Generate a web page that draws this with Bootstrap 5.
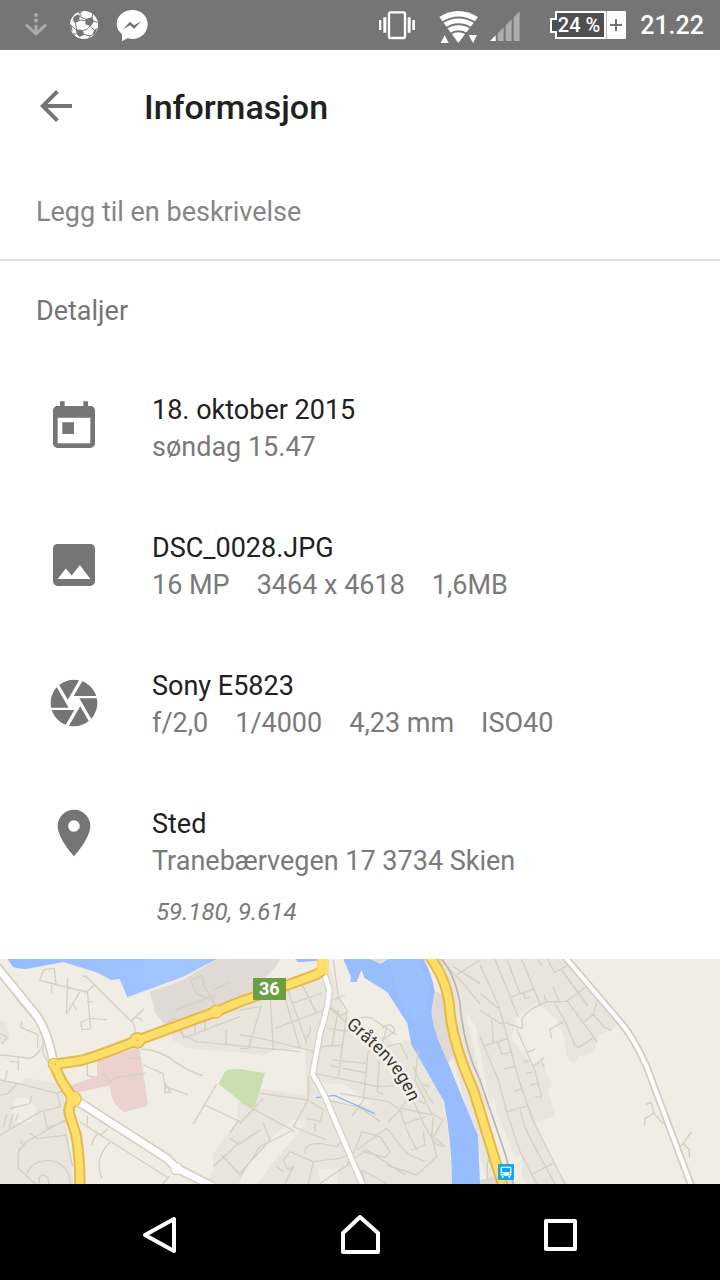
<!DOCTYPE html>
<html lang="nb">
<head>
<meta charset="utf-8">
<meta name="viewport" content="width=device-width, initial-scale=1">
<title>Informasjon</title>
<link href="https://cdn.jsdelivr.net/npm/bootstrap@5.3.0/dist/css/bootstrap.min.css" rel="stylesheet">
<style>
  body { font-family: Roboto, "Noto Sans", sans-serif; font-size: 27px; line-height: 37px; color: #212121; background: #fff; }
  svg { display: block; flex-shrink: 0; }
  .status-bar { height: 50px; background: #757575; color: #fff; padding: 0 16px 0 24px; }
  .status-left { gap: 18px; }
  .status-battery { margin-left: 30px; }
  .status-signal { margin-left: 12px; }
  .clock { font-size: 25px; font-weight: 500; line-height: 48px; padding-top: 2px; margin-left: 14px; }
  .app-header { height: 112px; padding-left: 32px; gap: 64px; }
  .app-title { font-size: 34px; font-weight: 500; line-height: 40px; padding-top: 2px; }
  .describe { height: 99px; padding: 4px 36px 0; border-bottom: 2px solid #e0e0e0; }
  .describe input { font-size: 27px; line-height: 37px; color: #212121; outline: 0; }
  .describe input::placeholder { color: #858585; opacity: 1; }
  .section-title { font-size: 27px; font-weight: 400; line-height: 37px; color: #757575; padding: 32px 36px 30px; }
  .info-row { padding: 32px 46px; gap: 50px; }
  .info-icon { margin-top: 7px; }
  .info-row:last-child { padding-bottom: 31px; }
  .info-row:last-child .info-icon { margin-top: -1px; }
  .muted { color: #7a7a7a; }
  .facts { column-gap: 27px; }
  .coords { font-size: 24px; line-height: 32px; padding: 16px 0 0 4px; }
  .map-area { min-height: 225px; background: #f0ede5; }
  .nav-bar { height: 96px; background: #000; padding: 6px 60px 0; }
</style>
</head>
<body>
<div class="d-flex flex-column min-vh-100">
  <div class="status-bar d-flex align-items-center">
    <div class="status-left d-flex">
      <svg width="28" height="50" viewBox="0 0 28 50" fill="#acacac" aria-hidden="true">
        <circle cx="12" cy="15" r="2"/><circle cx="12" cy="20.500" r="2"/>
        <path d="M12 25v8M2 24.500l10 9.500 10-9.500" fill="none" stroke="#acacac" stroke-width="3"/>
      </svg>
      <svg width="28" height="50" viewBox="210 0 84 150" aria-hidden="true">
        <circle cx="252" cy="75" r="42" fill="#fff"/>
        <g fill="#757575">
          <path d="M220 52l13-9 7 4-2 10-12 11-6-3zM257 57l20-6 5 14-10 14-16-6zM228 88l20 2 5 14-14 7-9-8zM283 89l9-6-6 18-10 5zM233 37l16-5-8 9zM210 72l5 3 3 20-7-8z"/>
          <path d="M240 50l20 9M226 66l4 24M230 66q10-9 28-3M228 66l10-7M249 91l11-2 12-13M272 79l12 13M280 62l12 6M252 103l18 5 8-4M270 108l-4 8M238 40l6 8M276 53l2-12M215 78l14 12M228 103l-8-2" fill="none" stroke="#757575" stroke-width="3"/>
        </g>
      </svg>
      <svg width="32" height="50" viewBox="346 0 96 150" aria-hidden="true">
        <path d="M395 30c26 0 46 18 46 43s-20 44-46 44c-6 0-10-1-15-2l-16 9v-21c-10-8-16-18-16-30 0-25 21-43 47-43z" fill="#fff"/>
        <path d="M367 88l21-23 12 11 22-12-22 23-11-11z" fill="#757575"/>
      </svg>
    </div>
    <svg class="ms-auto" width="36" height="50" viewBox="57 0 108 150" fill="#fff" aria-label="Vibrering" role="img">
      <rect x="87" y="37" width="48" height="77" rx="4" fill="none" stroke="#fff" stroke-width="7"/>
      <path d="M57 60h7v30h-7zM70 52h9v46h-9zM143 52h9v46h-9zM157 60h8v30h-8z"/>
    </svg>
    <svg class="ms-4" width="39" height="50" viewBox="235 0 117 150" fill="#fff" aria-label="Wi-Fi" role="img">
      <path d="M293 129L236 51Q262 33 293 33T352 51z"/>
      <path d="M242 69Q293 36 346 69M254 85Q293 60 334 85M268 102Q293 86 320 102" fill="none" stroke="#757575" stroke-width="6"/>
      <path d="M240 129l12-24 12 24zM324 105h25l-12 24z"/>
    </svg>
    <svg class="status-signal" width="30" height="50" viewBox="388 0 90 150" fill="#acacac" aria-label="Signal" role="img">
      <path d="M388 123l17-17v17z" fill="#fff"/>
      <path d="M411 100l18-18v41h-18zM435 76l18-18v65h-18zM459 52l18-18v89h-18z"/>
    </svg>
    <svg class="status-battery" width="76" height="50" viewBox="0 0 76 50" aria-label="Batteri 24 %" role="img">
      <path d="M6 12h49v26H6v-6H1V19h5z" fill="#4f4f4f" stroke="#fff" stroke-width="2"/>
      <rect x="56.500" y="11" width="19.500" height="28" rx="1" fill="#fff"/>
      <path d="M60 25h12M66 19v12" stroke="#757575" stroke-width="2"/>
      <text x="29" y="32" fill="#fff" font-size="20" font-weight="500" text-anchor="middle">24 %</text>
    </svg>
    <span class="clock">21.22</span>
  </div>

  <header class="app-header d-flex align-items-center">
    <button type="button" class="btn p-0 border-0" aria-label="Tilbake">
      <svg width="48" height="48" viewBox="0 0 24 24" fill="#757575"><path d="M20 11H7.830l5.590-5.590L12 4l-8 8 8 8 1.410-1.410L7.830 13H20z"/></svg>
    </button>
    <h1 class="app-title mb-0">Informasjon</h1>
  </header>

  <main class="d-flex flex-column flex-grow-1">
    <div class="describe d-flex align-items-center">
      <input type="text" class="w-100 border-0 p-0 bg-transparent" placeholder="Legg til en beskrivelse" aria-label="Legg til en beskrivelse">
    </div>
    <h2 class="section-title mb-0">Detaljer</h2>
    <ul class="list-unstyled mb-0">
      <li class="info-row d-flex">
        <svg class="info-icon" width="56" height="56" viewBox="0 0 24 24" fill="#757575" aria-hidden="true"><path d="M19 3h-1V1h-2v2H8V1H6v2H5c-1.110 0-2 .9-2 2v14c0 1.100.890 2 2 2h14c1.100 0 2-.9 2-2V5c0-1.100-.9-2-2-2zm0 16H5V8h14v11zM7 10h5v5H7z"/></svg>
        <div><div>18. oktober 2015</div><div class="muted">søndag 15.47</div></div>
      </li>
      <li class="info-row d-flex">
        <svg class="info-icon" width="56" height="56" viewBox="0 0 24 24" fill="#757575" aria-hidden="true"><path d="M21 19V5c0-1.100-.9-2-2-2H5c-1.100 0-2 .9-2 2v14c0 1.100.9 2 2 2h14c1.100 0 2-.9 2-2zM8.500 13.500l2.500 3.010L14.500 12l4.500 6H5z"/></svg>
        <div><div>DSC_0028.JPG</div><div class="facts muted d-flex flex-wrap"><span>16 MP</span><span>3464 x 4618</span><span>1,6MB</span></div></div>
      </li>
      <li class="info-row d-flex">
        <svg class="info-icon" width="56" height="56" viewBox="0 0 24 24" fill="#757575" aria-hidden="true"><path d="M9.400 10.500l4.770-8.260C13.470 2.090 12.750 2 12 2c-2.400 0-4.600.85-6.320 2.250l3.660 6.350.060-.1zM21.540 9c-.92-2.920-3.150-5.260-6-6.340L11.880 9h9.660zm.26 1h-7.490l.29.5 4.760 8.250C21 16.970 22 14.610 22 12c0-.69-.07-1.350-.2-2zM8.540 12l-3.900-6.750C3.010 7.030 2 9.390 2 12c0 .69.070 1.350.2 2h7.490l-1.150-2zm-6.080 3c.92 2.920 3.150 5.260 6 6.340L12.120 15H2.460zm11.270 0l-3.900 6.760c.7.150 1.420.24 2.170.24 2.400 0 4.600-.85 6.320-2.250l-3.660-6.350-.93 1.600z"/></svg>
        <div><div>Sony E5823</div><div class="facts muted d-flex flex-wrap"><span>f/2,0</span><span>1/4000</span><span>4,23 mm</span><span>ISO40</span></div></div>
      </li>
      <li class="info-row d-flex">
        <svg class="info-icon" width="56" height="56" viewBox="0 0 24 24" fill="#757575" aria-hidden="true"><path d="M12 2C8.130 2 5 5.130 5 9c0 5.250 7 13 7 13s7-7.750 7-13c0-3.870-3.130-7-7-7zm0 9.500a2.500 2.500 0 1 1 0-5 2.500 2.500 0 0 1 0 5z"/></svg>
        <div><div>Sted</div><div class="muted">Tranebærvegen 17 3734 Skien</div><div class="coords muted fst-italic">59.180, 9.614</div></div>
      </li>
    </ul>

    <div class="map-area d-flex flex-grow-1 overflow-hidden">
      <svg class="w-100 flex-grow-1" height="225" viewBox="0 27 2160 675" preserveAspectRatio="xMidYMid slice" role="img" aria-label="Kart over Gråtenvegen">
        <defs>
          <linearGradient id="lake" x1="0" x2="1" y1="0" y2="0"><stop offset="0" stop-color="#93bbff"/><stop offset=".55" stop-color="#a3c6ff"/><stop offset="1" stop-color="#93bbff"/></linearGradient>
          <path id="street" d="M1036 228Q1145 316 1187 378Q1218 424 1250 510"/>
          <path id="road36" d="M163 343L240 332Q290 320 412 271L648 185L720 155L850 110L950 73L968 60V20"/>
          <path id="roadSouth" d="M163 343Q180 395 221 447Q202 470 209 494L228 554Q240 620 240 710"/>
          <path id="roadEast" d="M1285 15Q1345 90 1350 190Q1362 290 1420 420L1510 710"/>
          <path id="lanes" d="M-10 50L100 185Q140 230 160 335M235 455L500 625L530 655L640 710"/>
          <path id="lane2" d="M974 75L988 120Q985 170 960 250L938 372L975 440L1090 710"/>
          <path id="lane3" d="M1690 15L1860 215Q1900 260 1940 350L2075 710"/>
        </defs>
        <rect width="2160" height="720" fill="#f0ede5"/>
        <!-- built-up areas -->
        <g fill="#e8e5dd">
          <path d="M0 210l18 8 12 45-20 20-10-5zM0 390l60 10 20-16 100 18 10 40 30 260H0zM520 240L720 165 990 60l50 140 140 60 70 20 60 110 30 120 20 192H620l20-40 0-50 70-100 10-105 200 28-5-140-90 5-30 15-240-22-40-25z"/>
          <path d="M1285 27h400l15 0 95 112 60 70-10 25-80 35-40 70q-30 0-30-70l-25-60-60-50-60 40-15 65 60 80 30-10 33 75-15 10 22 80-58 18 55 130 70 97h-130l-60-115-75-180-40-220z"/>
          <path d="M1695 200l60-20 40 80-10 40q-20 25-70 12z"/>
          <path d="M1330 100l60 60 55 240 100 302h-80L1350 300z"/>
        </g>
        <g fill="#f0ede5">
          <path d="M45 445l35-5 30 35-15 40-45 5-15-25zM950 395l85 10 80 55-60 10-90-20zM715 702l40-85 125-110 40 10-80 95-70 90zM955 655l60 5-5 42h-50z"/>
          <path d="M1025 170l110-50 100 130-40 40-140-90z"/>
          <path d="M590 430l60-30 45 20-60 110zM1480 440l15 60 50 120 20-5v87h-60l-50-200z"/>
        </g>
        <g fill="#dfdad4">
          <path d="M450 125L550 90 650 27h190l-10 20-70 75-265 105-30-40z"/>
          <path d="M1300 120l40 20 20 180-15 20-35-70-18-90zM1110 27h50l-25 13zM1440 690l60-15 50 27h-110z"/>
        </g>
        <!-- water -->
        <path d="M22 27H650L550 80 382 142 359 87 333 90 290 67 190 36 75 58 40 52zM885 27h75l-5 5-60 5z" fill="url(#lake)"/>
        <path d="M1030 27h80l30 14 25-14h105q26 45 34 95l-10 60q3 60 50 155 60 150 90 220l6 145h-84q0-120-24-248l-80-140-18-30-12-64-60-94-68-42-10-24-14 36-20-1 4-12z" fill="#97bdff"/>
        <path d="M1165 27h95l30 90-14 70-36 30-40-60z" fill="#9fc3ff" opacity=".5"/>
        <!-- hospital grounds and park -->
        <path d="M291 330l127-38 25 165q0 10-10 14l-60 15q-42-25-42-75l-3-4-103 22-15-22 81-30z" fill="#ebd2cf"/>
        <path d="M325 402q-2-30-20-32M326 400q15-20 45-20l65-10" fill="none" stroke="#d5d0c3" stroke-width="4"/>
        <path d="M655 402l20-38q12-7 45-7l75 12-30 100q-10 5-20 0l-25-17z" fill="#cadfaf"/>
        <!-- side streets -->
        <g fill="none" stroke="#d5d0c3" stroke-width="4" stroke-linejoin="round">
          <path d="M0 75Q70 180 110 213Q135 230 128 310L145 338M119 91l12-32 32-4 5 50M119 91l140 35 24-20M203 82l-4 110 40-65M155 105v25M217 158l12 22M247 79h10L390 210q20 15 15 50M262 126l10 110-26 3-4-22 28-12 50 4M262 155h16M392 214l40-38M405 203q15 0 24 12"/>
          <path d="M65 215l-2 18 50 20v40M0 315q60 5 90 10 25-10 35-35M55 318v45M55 335H30M22 362l-7 30M0 250l22 12-16 20M0 390l60 12 110 28 50-20M50 402l-25 28-25 6M172 430l10 40-60 15L0 555M130 482l12 52 55-20M95 436l-5 25-60 15M20 492l-10 40M38 492l-10 44M55 490l-8 24M195 510L80 575 55 605v50l50 46M118 565l80-10 20 95M62 572l8 16-15 12M80 670q20-40 70-38 60 10 60 70M118 700q-5-25 15-25 14 5 13 27M90 550l25 18"/>
          <path d="M262 342v35l20 4M382 325h38M425 297q60 5 95 35 50 35 88 45M430 345l58 25 8 40 68 24M496 398l-2 30 18-2-16-24M240 516l265 168M262 497v30M276 585q5-25 20-36M322 538l-20 16M330 577q-50 50-24 108M488 702l20-23M580 522l70-120M615 465l105 50M690 565l30 20M665 615l55 60M640 650l80-75M690 548l25-35"/>
          <path d="M572 92l35-15 5 30 35 60M572 92l18 40 50 17M525 182L640 137M640 120l45-22M520 222l30 35 40 18 310 30M500 220l20-15 20 15 10 45 170-65M585 215v35M615 210v30M678 240v50"/>
        </g>
        <g transform="translate(720)" fill="none" stroke="#d5d0c3" stroke-width="4" stroke-linejoin="round">
          <path d="M0 255l40 5 185 45M65 165l-40 130H0M90 130l10 170M120 95l60 200M140 110l60 170M180 90l50 100M105 235l135-50 30-10M155 160l90-30M210 225q5 25-15 45M0 180l60-10M280 30l15 110 28 45-20 12-30-25M275 150l40-15M270 175l80 70M295 180l-20 110M320 190l-25 190M245 290l65-5M260 235l70 10M225 370l190 40 60-5M275 330l105 10M270 347l110 22M350 210q30-20 60 5l60 40M385 300l-15 150-35 50M440 230l-20 80-8 115 20 8M425 235q30-25 40 10l-40 25M440 290l40-10 25 50M300 430l145 25 35 25 20-30M260 450l100 22 60 42M445 515l40-40 90 20M480 480l20 60 30 60M510 430l40 90 35 60 20 10M520 350q30 70 60 110M505 440l50 20M535 300l-10 90 50 100 35 20-30 50 35 30M540 400l30 10M495 520l60-20M515 600l40-15-5-40M580 500l-5 60 15 60-60 55-90-30M345 600l20-55 55 15 30 45-15 18-70-20M350 600l90-65 60 75 55 25M320 640l60-40 70 45 45 30M375 700l-10-40 75 40"/>
          <path d="M0 455l165 90M0 580l60-40M60 430l145 20 45 30-10 35-40-10M70 445L0 520M205 450l-45 80 100 40M205 380v70M70 520l20 50-90 100M195 610q-5-30 45-30l50 10 25-25M225 520v25M160 540L60 590 0 680M150 605l70 30 80-10 45-20M150 605l-20 25 15 30 15-10-25 50M220 635l-15 65M240 700l90-60M110 650l20 15"/>
          <path d="M600 27l80 85 40 50M640 50l80 50M650 75l70-45"/>
        </g>
        <g transform="translate(1440)" fill="none" stroke="#d5d0c3" stroke-width="4" stroke-linejoin="round">
          <path d="M0 45l55 120 20 70 40 150 45 130 95 187M0 130l58 47M0 180l60 40 20-2 45 18q5-10 0-30 20-30 75-50l60-2 70-53M45 27l70 175M80 27l40 103M125 27l55 135M90 143l70-26M130 130l5 15 15-3M175 27l10 20M202 27l22 40 38-20M245 60l78 108M218 108l20 48M192 135l8 22M225 162l30 50 30 75 12 5 45-30M260 150l80 110 12 18M312 215l28-22 10-35M340 192l30 38 25 12M252 215l-42 22 5 30M0 260l55 130 25 95 40 120 50 97M35 210l5 65M15 287l65-20M52 275l15 38 28-8M72 358l35-10M102 424l25-8M110 237l55 125 20 80-20-3M140 308l25-10M130 335l20-4M158 352l35-30M185 333l8 20M140 370l20-4M150 405l22-5M80 485l65-18M120 478q15 65 40 105l65 119M155 672l65-32M145 470l20 55"/>
          <path d="M498 463l16-5 8 32 28 32M522 490l-28 16v22M598 595l37-50M610 580l18 20v22M22 690v-50l15-25"/>
        </g>
        <path d="M1325 27Q1365 75 1380 160Q1390 290 1440 390L1515 610L1540 702" fill="none" stroke="#b8b5b2" stroke-width="5"/>
        <path d="M948 443l56-7 120 55" fill="none" stroke="#86b4ff" stroke-width="4"/>
        <!-- main roads -->
        <g fill="none" stroke-linejoin="round">
          <g stroke="#d5cfc3"><use href="#lanes" stroke-width="30"/><use href="#lane2" stroke-width="21"/><use href="#lane3" stroke-width="23"/></g>
          <circle cx="530" cy="656" r="20" fill="#d5cfc3"/>
          <g stroke="#fff"><use href="#lanes" stroke-width="20"/><use href="#lane2" stroke-width="14"/><use href="#lane3" stroke-width="12"/></g>
          <circle cx="530" cy="656" r="16" fill="#fff"/>
          <g fill="#e5b94d"><circle cx="163" cy="343" r="20"/><circle cx="221" cy="447" r="24"/><circle cx="412" cy="271" r="25"/><circle cx="648" cy="185" r="21"/></g>
          <g stroke="#e5b94d" stroke-width="34"><use href="#road36"/><use href="#roadSouth"/><use href="#roadEast"/></g>
          <g stroke="#ffdf67" stroke-width="22"><use href="#road36"/><use href="#roadSouth"/><use href="#roadEast"/></g>
          <g fill="#ffdf67"><circle cx="163" cy="343" r="17"/><circle cx="221" cy="447" r="21"/><circle cx="412" cy="271" r="20"/><circle cx="648" cy="185" r="17"/></g>
          <path d="M920 87l32-30V27h32v45l-26 4z" fill="#ffdf67"/>
          <g fill="#e5b94d"><circle cx="166" cy="343" r="3"/><circle cx="413" cy="271" r="3"/></g>
        </g>
        <rect x="759" y="84" width="99" height="66" fill="#6c9f43"/>
        <text x="808" y="136" font-size="54" font-weight="700" fill="#fff" text-anchor="middle">36</text>
        <text font-size="54" fill="#3b352b" stroke="#f3f1eb" stroke-width="16" stroke-linejoin="round" paint-order="stroke"><textPath href="#street">Gråtenvegen</textPath></text>
        <rect x="1494" y="642" width="48" height="48" rx="3" fill="#0aa8f5"/>
        <path d="M1505 650h26q3 0 3 3v21q0 3-3 3h-26q-3 0-3-3v-21q0-3 3-3zM1506 654v13h24v-13zM1505 676h6v7h-6zM1525 676h6v7h-6z" fill="#fff" fill-rule="evenodd"/>
        <path d="M1505 671h4M1527 671h4" stroke="#0aa8f5" stroke-width="4"/>
      </svg>
    </div>
  </main>

  <nav class="nav-bar d-flex align-items-center" aria-label="Systemnavigasjon">
    <button type="button" class="btn border-0 p-0 flex-fill d-flex justify-content-center" aria-label="Tilbake">
      <svg width="40" height="40" viewBox="0 0 40 40" fill="none" stroke="#fff" stroke-width="4" stroke-linejoin="round"><path d="M34 4v32L5 20z"/></svg>
    </button>
    <button type="button" class="btn border-0 p-0 flex-fill d-flex justify-content-center" aria-label="Hjem">
      <svg width="40" height="40" viewBox="0 0 40 40" fill="none" stroke="#fff" stroke-width="4" stroke-linejoin="round"><path d="M20 2l18 16v19H3V18z"/></svg>
    </button>
    <button type="button" class="btn border-0 p-0 flex-fill d-flex justify-content-center" aria-label="Oversikt">
      <svg width="40" height="40" viewBox="0 0 40 40" fill="none" stroke="#fff" stroke-width="4" stroke-linejoin="round"><path d="M6 6h29v28H6z"/></svg>
    </button>
  </nav>
</div>
<script src="https://cdn.jsdelivr.net/npm/bootstrap@5.3.0/dist/js/bootstrap.bundle.min.js"></script>
</body>
</html>
